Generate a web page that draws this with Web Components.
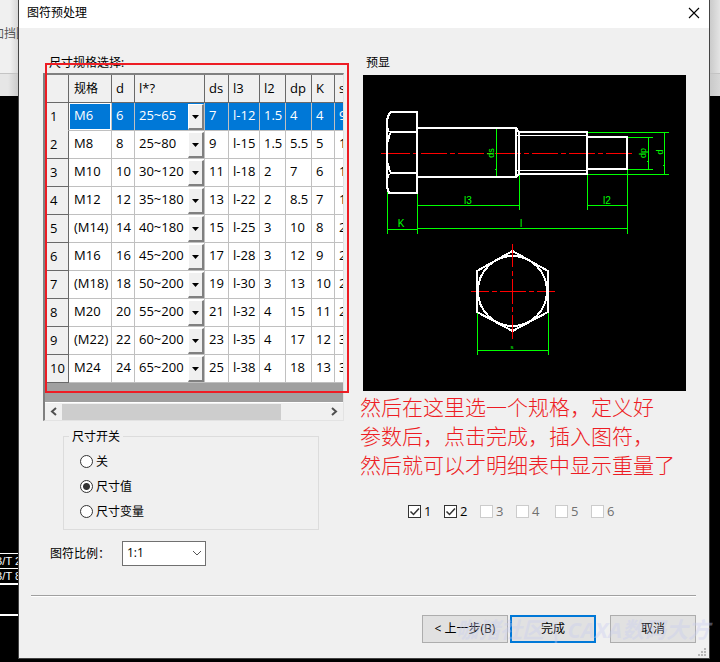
<!DOCTYPE html>
<html lang="zh-CN">
<head>
<meta charset="utf-8">
<title>图符预处理</title>
<style>
  html, body { margin: 0; min-height: 100vh; }
  body { background: #000; color: #000; font: 12px/16px "Open Sans", "Noto Sans CJK SC", sans-serif; position: relative; overflow: hidden; }
</style>
</head>
<body>
<cad-backdrop></cad-backdrop>
<part-dialog>
  <span slot="title">图符预处理</span>
  <size-panel slot="left"></size-panel>
  <preview-panel slot="right"></preview-panel>
  <wizard-actions slot="footer"></wizard-actions>
</part-dialog>

<script>
function define(name, html, setup) {
  customElements.define(name, class extends HTMLElement {
    constructor() {
      super();
      const root = this.attachShadow({ mode: "open" });
      const t = document.createElement("template");
      t.innerHTML = html;
      root.append(t.content.cloneNode(true));
      if (setup) setup.call(this, root);
    }
  });
}

/* Application window behind the dialog */
define("cad-backdrop", `
<style>
  :host { position: absolute; inset: 0; display: flex; flex-direction: column; overflow: hidden; }
  .ribbon { height: 73px; background: linear-gradient(90deg, #f0f0f0 10px, #d4d4d4 19px, #c8c8c8 calc(100% - 11px), #e4e4e4); display: flex; align-items: center; color: #555; }
  .ribbon span { margin: -6px 0 0 -8px; white-space: nowrap; }
  .bar { height: 22px; background: linear-gradient(90deg, #e6e6e6 8px, #c8c8c8 19px, #c8c8c8 calc(100% - 11px), #d8d8d8); border-top: 1px solid #c4c4c4; }
  .canvas { flex: 1; background: #000; color: #fff; padding-top: 457px; font: 11px/14px "Liberation Sans", sans-serif; }
  .canvas div { width: 19px; }
  .r { border-top: 1px solid #fff; white-space: nowrap; height: 14px; }
  .r span { margin-left: -5px; }
  .g { border-top: 2px solid #fff; height: 29px; }
  .e { border-top: 2px solid #fff; }
</style>
<div class="ribbon"><span>加挡圈</span></div>
<div class="bar"></div>
<div class="canvas"><div class="r"><span>B/T 2</span></div><div class="r"><span>B/T 8</span></div><div class="g"></div><div class="e"></div></div>`);

define("part-dialog", `
<style>
  :host { position: relative; display: flex; flex-direction: column; box-sizing: border-box; min-height: calc(100vh - 4px); margin: 0 11px 4px 19px; background: #f0f0f0; box-shadow: 0 0 0 1px #444; }
  header { display: flex; justify-content: space-between; align-items: center; height: 28px; background: #fff; padding: 0 9px 2px 8px; box-sizing: border-box; }
  button { border: 0; background: none; padding: 0; width: 12px; height: 12px; display: block; }
  svg { display: block; }
  main { display: grid; grid-template-columns: minmax(0, 305fr) minmax(0, 323fr); column-gap: 14px; padding: 27px 23px 0 25px; }
  footer { margin: 29px 13px 0 12px; }
  .grip { position: absolute; right: 3px; bottom: 2px; }
</style>
<header><slot name="title"></slot><button aria-label="关闭"><svg width="12" height="12" viewBox="0 0 12 12" stroke="#000" stroke-width="1.1"><path d="M1 1l10 10M11 1L1 11"/></svg></button></header>
<main><slot name="left"></slot><slot name="right"></slot></main>
<footer><slot name="footer"></slot></footer>
<svg class="grip" width="8" height="8" fill="#b8b8b8"><path d="M6 0h2v2h-2zM3 3h2v2h-2zM6 3h2v2h-2zM0 6h2v2h-2zM3 6h2v2h-2zM6 6h2v2h-2z"/></svg>`);

define("size-panel", `
<style>
  :host { display: block; }
  .label { padding-left: 5px; height: 18px; }
  size-table { margin: 0 5px 0 -1px; }
  .list { position: relative; }
  .mark { position: absolute; left: 1px; right: 0; top: -10px; height: 326px; border: 2px solid #ed1c24; pointer-events: none; }
  .scale { display: flex; align-items: center; padding: 11px 0 0 6px; }
  .scale label { width: 72px; }
  .select { position: relative; }
  select { appearance: none; display: block; width: 84px; height: 25px; border: 1px solid #707070; border-radius: 0; background: #fff; padding: 0 4px 2px; font: inherit; color: #000; }
  .select svg { position: absolute; right: 4px; top: 9px; pointer-events: none; }
</style>
<div class="label">尺寸规格选择:</div>
<div class="list"><size-table></size-table><div class="mark"></div></div>
<switch-group></switch-group>
<div class="scale"><label for="s">图符比例：</label><div class="select"><select id="s"><option>1:1</option></select><svg width="10" height="7" fill="none" stroke="#555"><path d="M1 1l4 4 4-4"/></svg></div></div>`);

define("switch-group", `
<style>
  :host { display: block; margin: 7px 30px 0 19px; }
  fieldset { margin: 0; padding: 4px 0 5px 14px; border: 1px solid #dcdcdc; min-width: 0; }
  legend { margin-left: -9px; padding: 0 3px; line-height: 17px; }
  label { display: flex; align-items: center; gap: 3px; height: 25px; }
  input { appearance: none; width: 13px; height: 13px; margin: 0 0 0 2px; border: 1px solid #333; border-radius: 50%; background: #fff; }
  input:checked { background: radial-gradient(circle, #333 3px, #fff 4px); }
</style>
<fieldset><legend>尺寸开关</legend>
<label><input type="radio" name="sw">关</label>
<label><input type="radio" name="sw" checked>尺寸值</label>
<label><input type="radio" name="sw">尺寸变量</label></fieldset>`);

define("size-table", `
<style>
  :host { display: block; border: 1px solid; border-width: 2px 1px 1px 2px; border-color: #808080 #e3e3e3 #e3e3e3 #808080; background: #a0a0a0; }
  .view { overflow: hidden; padding-bottom: 19px; }
  table { border-collapse: separate; border-spacing: 0; table-layout: fixed; width: 323px; font-size: 13px; line-height: 16px; }
  td, th { box-sizing: border-box; height: 28px; padding: 0 0 4px 4px; text-align: left; font-weight: 400; white-space: nowrap; background: #fff; border-right: 1px solid #c0c0c0; border-bottom: 1px solid #c0c0c0; }
  th { background: #f0f0f0; border-color: #696969; padding: 0 0 2px 4px; }
  th.cn { font-size: 12px; padding: 0 0 0 5px; }
  td:nth-child(2) { padding-left: 5px; }
  tbody th { padding: 0 0 2px 5px; }
  tr.on td { background: #0078d7; color: #fff; }
  tr.on td:nth-child(2) { box-shadow: inset 0 0 0 1px #fff; }
  tr.on th { border-color: #f0f0f0; border-right-color: #696969; }
  td.combo { padding: 0; }
  .cell { display: flex; justify-content: space-between; align-items: center; padding-left: 4px; height: 27px; }
  .cell span { padding-bottom: 4px; }
  button { width: 16px; height: 26px; padding: 2px 0 0; background: #f0f0f0; border: 1px solid; border-width: 1px 2px 2px 1px; border-color: #fff #808080 #808080 #fff; display: grid; place-items: center; }
  .scroll { height: 17px; display: grid; grid-template-columns: 17px 1fr 17px; align-items: center; background: #f0f0f0; border-top: 1px solid #fff; }
  .scroll svg { display: block; margin: auto; }
  .thumb { width: 83%; height: 16px; background: #cdcdcd; }
</style>
<div class="view"><table><colgroup><col style="width:24px"><col style="width:43px"><col style="width:23px"><col style="width:70px"><col style="width:24px"><col style="width:31px"><col style="width:26px"><col style="width:26px"><col style="width:23px"><col style="width:33px"></colgroup><thead></thead><tbody></tbody></table></div>
<div class="scroll"><svg width="7" height="9" fill="none" stroke="#505050" stroke-width="2"><path d="M6 1L2 4.5 6 8"/></svg><div class="thumb"></div><svg width="7" height="9" fill="none" stroke="#505050" stroke-width="2"><path d="M1 1l4 3.500L1 8"/></svg></div>`,
function (root) {
  const head = ["", "规格", "d", "l*?", "ds", "l3", "l2", "dp", "K", "s"];
  const rows = [
    ["M6", 6, "25~65", 7, "l-12", 1.5, 4, 4, 9], ["M8", 8, "25~80", 9, "l-15", 1.5, 5.5, 5, 12],
    ["M10", 10, "30~120", 11, "l-18", 2, 7, 6, 15], ["M12", 12, "35~180", 13, "l-22", 2, 8.5, 7, 18],
    ["(M14)", 14, "40~180", 15, "l-25", 3, 10, 8, 21], ["M16", 16, "45~200", 17, "l-28", 3, 12, 9, 24],
    ["(M18)", 18, "50~200", 19, "l-30", 3, 13, 10, 27], ["M20", 20, "55~200", 21, "l-32", 4, 15, 11, 28],
    ["(M22)", 22, "60~200", 23, "l-35", 4, 17, 12, 34], ["M24", 24, "65~200", 25, "l-38", 4, 18, 13, 36]];
  root.querySelector("thead").innerHTML = "<tr>" + head.map((h, i) => `<th scope="col"${i === 1 ? ' class="cn"' : ""}>${h}</th>`).join("") + "</tr>";
  root.querySelector("tbody").innerHTML = rows.map((r, n) => `<tr${n ? "" : ' class="on"'}><th scope="row">${n + 1}</th>` + r.map((v, i) => i === 2
    ? `<td class="combo"><div class="cell"><span>${v}</span><button aria-label="选择长度"><svg width="7" height="4"><path d="M0 0h7L3.500 4z"/></svg></button></div></td>`
    : `<td>${v}</td>`).join("") + "</tr>").join("");
});

define("preview-panel", `
<style>
  :host { display: block; }
  .label { padding-left: 3px; height: 20px; }
  bolt-drawing { display: block; }
  p { margin: 1px -12px 0 -3px; color: #ed1c24; font: 300 21px/29px "Noto Sans CJK SC", sans-serif; }
  .checks { display: grid; grid-template-columns: 36px 36px 36px 39px 36px 36px; margin: 24px 0 0 45px; }
  label { display: flex; align-items: center; gap: 3px; font-size: 13px; line-height: 16px; }
  label.off { color: #707070; }
  input { appearance: none; box-sizing: border-box; width: 13px; height: 13px; margin: 0; border: 1px solid #333; background: #fff; }
  input:disabled { border-color: #ccc; }
  .box { display: grid; }
  .box > * { grid-area: 1 / 1; }
</style>
<div class="label">预显</div>
<bolt-drawing></bolt-drawing>
<p>然后在这里选一个规格，定义好<br>参数后，点击完成，插入图符，<br>然后就可以才明细表中显示重量了</p>
<div class="checks"></div>`,
function (root) {
  root.querySelector(".checks").innerHTML = [1, 2, 3, 4, 5, 6].map(n => n < 3
    ? `<label><span class="box"><input type="checkbox" checked><svg width="13" height="13" fill="none" stroke="#333" stroke-width="1.500"><path d="M2.500 6.500l3 3 5.500-6"/></svg></span>${n}</label>`
    : `<label class="off"><span class="box"><input type="checkbox" disabled></span>${n}</label>`).join("");
});

define("bolt-drawing", `
<style>
  svg { display: block; width: 100%; background: #000; shape-rendering: crispEdges; }
  text { fill: #0f0; font-family: "Liberation Sans Narrow", "Liberation Sans", sans-serif; text-anchor: middle; }
</style>
<svg viewBox="363 75 323 316" fill="none" role="img" aria-label="螺栓预览">
  <g stroke="#f00">
    <path d="M381 153.500h29"/><path d="M413 153.500h221" stroke-dasharray="5 3 26 3"/>
    <path d="M471 291.500h18m3 0h5m3 0h26m3 0h5m3 0h18"/>
  </g>
  <g stroke="#0f0">
    <path d="M387.500 190v44M417.500 194v40M387 229.500h30M417 228.500h211M417 205.500h102M519.500 175v35M587.500 175v35M587 205.500h40M627.500 170v64"/>
    <path d="M496.500 129v48M495.500 169v1M648.500 138v31M647.500 161v1M627 137.500h26M627 169.500h26M587 132.500h82M587 174.500h82M664.500 133v41M663.500 165v1"/>
    <path d="M477.500 312v43M548.500 312v43M477 350.500h71"/>
  </g>
  <g stroke="#fff" stroke-width="2">
    <path d="M417 112h-26l-2 2-1 3-1 3v67l1 3 1 3 2 0h26zM417 132h-26l-2 4-1 6M387 127l2 5M417 173h-26l-2-4-1-6M387 179l2-5M417 128h99v49h-99M516 128l3 4h68v42h-68l-3 3M519 132v42M587 137h40v32h-40v5M587 132v5v32"/>
    <path d="M512.500 251L477 271v41l35.500 19L548 312v-41z"/><ellipse cx="512.500" cy="291" rx="34.500" ry="35"/>
  </g>
  <path stroke="#fff" d="M517 135.500h70M517 170.500h70"/>
  <path stroke="#f00" d="M512.500 244v23m0 4v5m0 3v25m0 3v5m0 3v24"/>
  <g font-size="10"><text x="468" y="204">l3</text><text x="607" y="204">l2</text><text x="401" y="227">K</text><text x="521" y="227">l</text></g>
  <g font-size="9"><text transform="translate(494 153) rotate(-90)">ds</text><text transform="translate(646 153) rotate(-90)">dp</text><text transform="translate(663 152) rotate(-90)">d</text></g>
  <text x="512" y="349" font-size="6">s</text>
</svg>`);

define("wizard-actions", `
<style>
  :host { display: block; position: relative; border-top: 1px solid #a0a0a0; box-shadow: inset 0 1px #fff; padding-top: 19px; }
  .row { display: flex; justify-content: flex-end; gap: 2px; }
  button { width: 86px; height: 28px; border: 1px solid #adadad; background: #e1e1e1; font: inherit; color: #000; padding: 0; }
  .main { border: 2px solid #0078d7; }
  .last { margin-left: 12px; }
  .wm { position: absolute; right: -14px; top: 20px; font: italic 700 22px/26px "Open Sans", "Noto Sans CJK SC", sans-serif; color: rgba(200, 205, 240, .4); white-space: nowrap; pointer-events: none; }
</style>
<div class="row"><button>&lt; 上一步(B)</button><button class="main">完成</button><button class="last">取消</button></div>
<div class="wm">咖猪社区 | CAXA数码大方</div>`);
</script>
</body>
</html>
